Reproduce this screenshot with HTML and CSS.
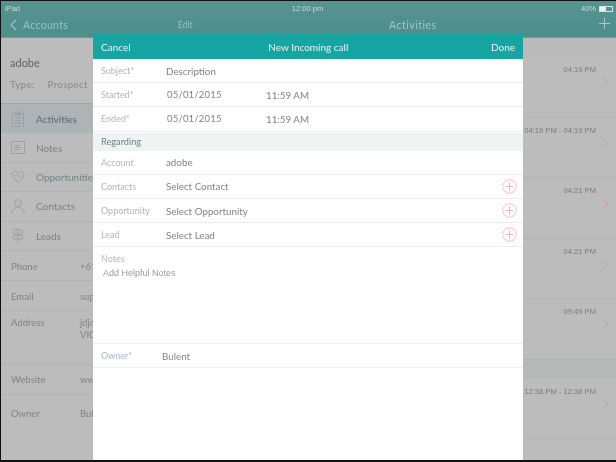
FILE: index.html
```html
<!DOCTYPE html>
<html lang="en">
<head>
<meta charset="utf-8">
<title>New Incoming call</title>
<link rel="stylesheet" href="styles.css">
</head>
<body>
<div class="screen">
  <header class="topbar">
    <div class="status">
      <span>iPad</span>
      <span class="clock">12:00 pm</span>
      <span class="battery-wrap">40% <span class="battery"><span class="battery-fill"></span></span></span>
    </div>
    <div class="nav">
      <div class="nav-left">
        <svg class="back" width="7" height="12" viewBox="0 0 7 12"><path d="M6 1 1 6l5 5" fill="none" stroke="#9cc1bf" stroke-width="1.2"/></svg>
        <span class="nav-accounts">Accounts</span>
        <span class="nav-edit">Edit</span>
      </div>
      <div class="nav-title">Activities</div>
      <svg class="nav-plus" width="11" height="11" viewBox="0 0 11 11"><path d="M5.500 0v11M0 5.500h11" stroke="#a9c9c7" stroke-width="1"/></svg>
    </div>
  </header>

  <div class="panes">
    <aside class="side">
      <div class="acct">
        <div class="acct-name">adobe</div>
        <div class="acct-type"><span>Type:</span><span>Prospect</span></div>
      </div>
      <div class="menu menu-on">
        <svg width="14" height="16" viewBox="0 0 14 16"><path d="M1.500 2.500h11v13h-11zM4.500 1h5v3h-5zM4 7h6M4 9.500h6M4 12h6" fill="none" stroke="#969b9e" stroke-width=".8"/></svg>
        <span>Activities</span>
      </div>
      <div class="menu">
        <svg width="14" height="13" viewBox="0 0 14 13"><path d="M.5.500h13v12H.5zM3.500 4.500h6M3.500 6.500h7M3.500 8.500h5" fill="none" stroke="#969a9b" stroke-width=".8"/></svg>
        <span>Notes</span>
      </div>
      <div class="menu">
        <svg width="15" height="13" viewBox="0 0 15 13"><path d="M1 3 4 1l3.500 1L11 1l3 2-1 5-4 4-2 .5-3-2-2-3zM4 6l3-2 5 5M4.500 9l1.500-1M6 10.500l1.500-1.500" fill="none" stroke="#969a9b" stroke-width=".8"/></svg>
        <span class="clip">Opportunities</span>
      </div>
      <div class="menu">
        <svg width="14" height="15" viewBox="0 0 14 15"><circle cx="7" cy="4" r="3.300" fill="none" stroke="#969a9b" stroke-width=".8"/><path d="M.5 14.500C1 10.500 4 8.500 7 8.500s6 2 6.500 6" fill="none" stroke="#969a9b" stroke-width=".8"/></svg>
        <span>Contacts</span>
      </div>
      <div class="menu">
        <svg width="14" height="15" viewBox="0 0 14 15"><path d="M7 0v15M2.500 2H11l2 2-2 2H2.500zM3 7.500h8.500v3.500H3L1 9.300z" fill="none" stroke="#969a9b" stroke-width=".8"/></svg>
        <span>Leads</span>
      </div>
      <div class="info info-low"><span class="info-k">Phone</span><span>+61</span></div>
      <div class="info info-low"><span class="info-k">Email</span><span>support</span></div>
      <div class="info info-addr"><span class="info-k">Address</span><span>jdjd<br>VIC</span></div>
      <div class="info"><span class="info-k">Website</span><span>www</span></div>
      <div class="info info-last"><span class="info-k">Owner</span><span>Bulent</span></div>
    </aside>

    <main class="list">
      <div class="section"></div>
      <div class="item"><span>04:19 PM</span><svg class="chev" width="5" height="9" viewBox="0 0 5 9"><path d="m.5.500 4 4-4 4" fill="none" stroke="#c99a9e"/></svg></div>
      <div class="item"><span>04:19 PM - 04:19 PM</span><svg class="chev" width="5" height="9" viewBox="0 0 5 9"><path d="m.5.500 4 4-4 4" fill="none" stroke="#c99a9e"/></svg></div>
      <div class="item"><span>04:21 PM</span><svg class="chev" width="5" height="9" viewBox="0 0 5 9"><path d="m.5.500 4 4-4 4" fill="none" stroke="#c99a9e"/></svg></div>
      <div class="item"><span>04:21 PM</span><svg class="chev" width="5" height="9" viewBox="0 0 5 9"><path d="m.5.500 4 4-4 4" fill="none" stroke="#c99a9e"/></svg></div>
      <div class="item"><span>09:49 PM</span><svg class="chev" width="5" height="9" viewBox="0 0 5 9"><path d="m.5.500 4 4-4 4" fill="none" stroke="#c99a9e"/></svg></div>
      <div class="section"></div>
      <div class="item"><span>12:38 PM - 12:38 PM</span><svg class="chev" width="5" height="9" viewBox="0 0 5 9"><path d="m.5.500 4 4-4 4" fill="none" stroke="#c99a9e"/></svg></div>
    </main>
  </div>

  <section class="modal">
    <div class="modal-head">
      <span>Cancel</span>
      <span class="modal-title">New Incoming call</span>
      <span>Done</span>
    </div>
    <div class="row"><span class="lab">Subject*</span><span class="val">Description</span></div>
    <div class="row"><span class="lab">Started*</span><span class="val val-date">05/01/2015</span><span class="val">11:59 AM</span></div>
    <div class="row"><span class="lab">Ended*</span><span class="val val-date">05/01/2015</span><span class="val">11:59 AM</span></div>
    <div class="group">Regarding</div>
    <div class="row"><span class="lab">Account</span><span class="val">adobe</span></div>
    <div class="row"><span class="lab">Contacts</span><span class="val">Select Contact</span>
      <svg class="add" width="15" height="15" viewBox="0 0 15 15"><circle cx="7.500" cy="7.500" r="6.800" fill="none" stroke="#f7bcc4"/><path d="M7.500 3.500v8M3.500 7.500h8" stroke="#e8a6ae" stroke-width=".8"/></svg></div>
    <div class="row"><span class="lab">Opportunity</span><span class="val">Select Opportunity</span>
      <svg class="add" width="15" height="15" viewBox="0 0 15 15"><circle cx="7.500" cy="7.500" r="6.800" fill="none" stroke="#f7bcc4"/><path d="M7.500 3.500v8M3.500 7.500h8" stroke="#e8a6ae" stroke-width=".8"/></svg></div>
    <div class="row"><span class="lab">Lead</span><span class="val">Select Lead</span>
      <svg class="add" width="15" height="15" viewBox="0 0 15 15"><circle cx="7.500" cy="7.500" r="6.800" fill="none" stroke="#f7bcc4"/><path d="M7.500 3.500v8M3.500 7.500h8" stroke="#e8a6ae" stroke-width=".8"/></svg></div>
    <div class="notes">
      <div class="notes-lab">Notes</div>
      <div class="notes-hint">Add Helpful Notes</div>
    </div>
    <div class="row row-owner"><span class="lab lab-owner">Owner*</span><span class="val">Bulent</span></div>
  </section>
</div>
</body>
</html>
```
FILE: styles.css
```css
* { box-sizing: border-box; }
html, body { margin: 0; height: 100%; }
body {
  background: #111;
  font-family: "Lato", "Open Sans", sans-serif;
  font-size: 9.800px;
  overflow: hidden;
}
.screen {
  position: relative;
  width: 615px;
  height: 459px;
  margin: 1px 0 0 1px;
  background: #bcbcbc;
  display: flex;
  flex-direction: column;
  overflow: hidden;
  filter: blur(.3px);
}
.topbar {
  height: 37px;
  flex: none;
  background: linear-gradient(#55938f, #4e8f8b);
  color: #c6dcda;
  border-bottom: 1px solid #6f9a98;
}
.status {
  height: 14px;
  padding: 1px 3px 0 4px;
  font-family: "Liberation Sans", sans-serif;
  font-size: 7.500px;
  display: flex;
  justify-content: space-between;
  align-items: center;
}
.clock { margin-left: 14px; }
.battery-wrap { display: flex; align-items: center; gap: 3px; }
.battery { width: 14px; height: 6px; border: 1px solid #d5e3e2; display: block; }
.battery-fill { display: block; width: 6px; height: 4px; background: #e8efee; }
.nav { height: 20px; display: flex; align-items: center; position: relative; }
.nav-left { width: 348px; display: flex; align-items: center; padding-left: 9px; }
.back { margin-right: 6px; }
.nav-accounts { font-size: 10.500px; color: #9cc1bf; letter-spacing: .3px; width: 155px; }
.nav-edit { font-size: 8.500px; color: #9cc1bf; }
.nav-title { font-size: 10.500px; color: #a3c6c4; letter-spacing: .5px; width: 255px; padding-left: 40px; }
.nav-plus { flex: none; margin: -3px 0 0 -5px; }
.panes { flex: 1; display: flex; min-height: 0; }
.side { width: 250px; flex: none; color: #7f8282; font-size: 9.800px; }
.acct { height: 66px; padding: 16px 0 0 9px; border-bottom: 1px solid #9fa5a7; }
.acct-name { font-size: 11px; line-height: 17px; color: #5f6466; }
.acct-type { margin-top: 7px; display: flex; gap: 13px; letter-spacing: .3px; color: #85888a; }
.menu {
  height: 29.400px;
  display: flex;
  align-items: center;
  gap: 11px;
  padding-left: 10px;
  border-bottom: 1px solid #b1b3b3;
  color: #7b8184;
  font-size: 10px;
}
.menu svg { width: 14px; flex: none; }
.menu-on { background: #aeb3b6; color: #5f666b; border-bottom: 0; }
.info {
  height: 30px;
  display: flex;
  align-items: center;
  padding-left: 10px;
  border-bottom: 1px solid #b1b3b3;
  color: #818383;
  font-size: 9.500px;
}
.info-low { padding-top: 3px; }
.info-k { width: 69px; flex: none; }
.info-addr { height: 54px; align-items: flex-start; padding-top: 6px; line-height: 12px; }
.info-last { border-bottom: 0; padding-top: 7px; }
.list { flex: 1; min-width: 0; }
.section { height: 19px; background: #b7b9b8; }
.list .section:first-child { background: #b9bab9; }
.item {
  height: 60.500px;
  position: relative;
  border-bottom: 1px solid #b3b3b3;
  font-family: "Liberation Sans", sans-serif;
  font-size: 7.600px;
  color: #7a7a7a;
  text-align: right;
  padding: 8px 20px 0 0;
}
.chev { position: absolute; right: 8px; top: 21px; }
.modal {
  position: absolute;
  left: 92px;
  top: 33px;
  bottom: 0;
  width: 430px;
  background: #fff;
  color: #86898a;
}
.modal-head {
  height: 25px;
  padding: 0 8px;
  background: #17a5a3;
  color: #e3f3f2;
  display: flex;
  justify-content: space-between;
  align-items: center;
  font-size: 10px;
}
.modal-title { margin-left: -5px; }
.row {
  height: 24.200px;
  display: flex;
  align-items: center;
  padding-left: 8px;
  border-bottom: 1px solid #ececec;
  position: relative;
}
.lab { width: 65px; flex: none; color: #b1b4b6; font-size: 9px; }
.val { color: #808384; }
.val-date { width: 99px; letter-spacing: .2px; font-size: 9.500px; margin-left: 1px; }
.group {
  height: 18px;
  margin-top: 1px;
  padding: 0 0 1px 8px;
  display: flex;
  align-items: center;
  background: #eff3f4;
  color: #6d8087;
  font-size: 9.200px;
}
.add { position: absolute; right: 6px; top: 4px; }
.notes { height: 97px; padding: 6px 8px 0; border-bottom: 1px solid #f0f0f0; }
.notes-lab { color: #b5b8ba; font-size: 9px; }
.notes-hint { margin: 4px 0 0 2px; font-family: "Liberation Sans", sans-serif; font-size: 9px; color: #9a9c9d; }
.row-owner { height: 24px; border-bottom: 1px solid #f0f0f0; }
.lab-owner { width: 61px; color: #a9b8c6; }
```
